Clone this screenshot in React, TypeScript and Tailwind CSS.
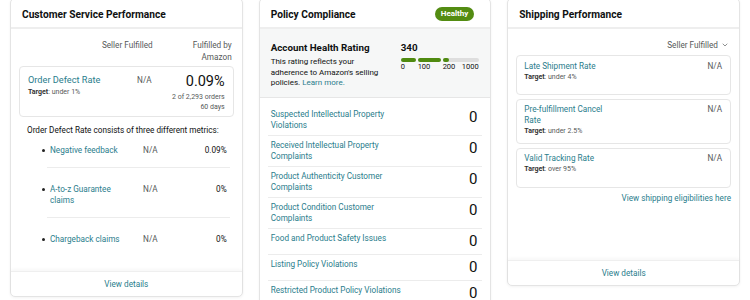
import { ChevronDown } from 'lucide-react';

const link = 'text-[#2a7d8c]';

function CardHeader({ title, badge }: { title: string; badge?: string }) {
    return (
        <div className="h-[30px] flex items-center justify-between pl-[11px] pr-[16px] pt-[4px] border-b-2 border-[#eeeeee]">
            <h2 className="text-[10.2px] font-bold text-[#0f1111]">{title}</h2>
            {badge && (
                <span className="h-[14px] px-[6px] -mt-[3px] flex items-center rounded-full bg-[#538c12] text-white text-[8px] font-bold">
                    {badge}
                </span>
            )}
        </div>
    );
}

function CardFooter() {
    return (
        <div className={`mt-auto h-[25px] flex items-center justify-center border-t border-[#efefef] shadow-[0_-2px_3px_rgba(0,0,0,0.03)] text-[8.2px] ${link}`}>
            View details
        </div>
    );
}

const defectMetrics = [
    { name: 'Negative feedback', seller: 'N/A', amazon: '0.09%' },
    { name: 'A-to-z Guarantee claims', seller: 'N/A', amazon: '0%' },
    { name: 'Chargeback claims', seller: 'N/A', amazon: '0%' },
];

const policyRows = [
    'Suspected Intellectual Property Violations',
    'Received Intellectual Property Complaints',
    'Product Authenticity Customer Complaints',
    'Product Condition Customer Complaints',
    'Food and Product Safety Issues',
    'Listing Policy Violations',
    'Restricted Product Policy Violations',
    'Other Policy Violations',
];

const shippingMetrics = [
    { name: 'Late Shipment Rate', target: 'under 4%' },
    { name: 'Pre-fulfillment Cancel Rate', target: 'under 2.5%' },
    { name: 'Valid Tracking Rate', target: 'over 95%' },
];

function CustomerServiceCard() {
    return (
        <div className="h-[299px] flex flex-col bg-white border border-[#e4e4e4] rounded-[5px] shadow-[0_1px_3px_rgba(0,0,0,0.05)]">
            <CardHeader title="Customer Service Performance" />
            <div className="px-2 pt-[10px]">
                {/* Column headings */}
                <div className="flex pr-[2px] text-[8.2px] leading-[12px] text-[#565959]">
                    <div className="flex-1" />
                    <div className="text-right">Seller Fulfilled</div>
                    <div className="w-[79px] text-right">
                        Fulfilled by
                        <br />
                        Amazon
                    </div>
                </div>

                {/* Order defect rate box */}
                <div className="mt-[3px] border border-[#e6e6e6] rounded-[4px] px-[8px] pt-[7px] pb-[4px] flex items-start">
                    <div className="flex-1">
                        <div className={`text-[9.2px] leading-[12px] ${link}`}>Order Defect Rate</div>
                        <div className="mt-[1px] text-[7px] leading-[10px] text-[#565959]">
                            <span className="font-bold text-[#333]">Target</span>: under 1%
                        </div>
                    </div>
                    <div className="text-[8.2px] leading-[12px] text-[#565959]">N/A</div>
                    <div className="w-[73px] text-right">
                        <div className="text-[14.5px] leading-[16px] text-[#0f1111]">0.09%</div>
                        <div className="mt-[2px] text-[7px] leading-[10px] text-[#565959]">2 of 2,293 orders</div>
                        <div className="text-[7px] leading-[10px] text-[#565959]">60 days</div>
                    </div>
                </div>

                <p className="mt-[8px] pl-2 text-[8.2px] leading-[11px] text-[#0f1111]">
                    Order Defect Rate consists of three different metrics:
                </p>

                <ul className="mt-[9px] ml-[28px] mr-[4px]">
                    {defectMetrics.map((m, i) => (
                        <li
                            key={m.name}
                            className={`grid grid-cols-[76px_1fr_69px] pl-[3px] pr-[3px] pb-[11px] text-[8.2px] leading-[11px] ${
                                i === 0 ? 'pt-0' : 'pt-[16px]'
                            } ${i < defectMetrics.length - 1 ? 'border-b border-[#ececec]' : ''}`}
                        >
                            <div className={`${link} flex`}>
                                <span className="shrink-0 -ml-[8px] mr-[5px] mt-[4px] w-[3px] h-[3px] rounded-full bg-[#222]" />
                                <span>{m.name}</span>
                            </div>
                            <div className="text-right text-[#565959]">{m.seller}</div>
                            <div className="text-right text-[#0f1111]">{m.amazon}</div>
                        </li>
                    ))}
                </ul>
            </div>
            <CardFooter />
        </div>
    );
}

function PolicyComplianceCard() {
    return (
        <div className="bg-white border border-[#e4e4e4] rounded-[5px] shadow-[0_1px_3px_rgba(0,0,0,0.05)]">
            <CardHeader title="Policy Compliance" badge="Healthy" />

            {/* Account health rating */}
            <div className="flex bg-[#f6f7f7] border-b border-[#e6e6e6] pl-[11px] pt-[12px] pb-[8px]">
                <div className="w-[115px]">
                    <div className="text-[9.8px] leading-[13px] font-bold text-[#0f1111]">Account Health Rating</div>
                    <p className="mt-[3px] text-[8px] leading-[10.5px] text-[#0f1111]">
                        This rating reflects your adherence to Amazon's selling policies.{' '}
                        <span className={link}>Learn more.</span>
                    </p>
                </div>
                <div className="ml-[15px] w-[78px]">
                    <div className="text-[9.8px] leading-[13px] font-bold text-[#0f1111]">340</div>
                    <div className="mt-[4px] flex gap-[2px] h-[4px]">
                        <div className="w-[15px] rounded-[2px] bg-[#4f8a10]" />
                        <div className="w-[23px] rounded-[2px] bg-[#4f8a10]" />
                        <div className="flex-1 rounded-[2px] bg-[#dedede] flex">
                            <div className="w-[6px] rounded-[2px] bg-[#4f8a10]" />
                        </div>
                    </div>
                    <div className="flex text-[7.5px] leading-[10px] text-[#0f1111]">
                        <span className="w-[17px]">0</span>
                        <span className="w-[25px]">100</span>
                        <span>200</span>
                        <span className="ml-auto">1000</span>
                    </div>
                </div>
            </div>

            {/* Policy rows */}
            <div className="px-2 pt-[7px]">
                {policyRows.map((row) => (
                    <div
                        key={row}
                        className="flex items-start justify-between py-[4px] pl-[3px] pr-[5px] border-b border-[#ececec]"
                    >
                        <span className={`w-[140px] text-[8.2px] leading-[11px] ${link}`}>{row}</span>
                        <span className="text-[15px] leading-[17px] text-[#0f1111]">0</span>
                    </div>
                ))}
            </div>
        </div>
    );
}

function ShippingCard() {
    return (
        <div className="h-[288px] flex flex-col bg-white border border-[#e4e4e4] rounded-[5px] shadow-[0_1px_3px_rgba(0,0,0,0.05)]">
            <CardHeader title="Shipping Performance" />
            <div className="px-2 pt-[10px]">
                <div className="flex justify-end items-center gap-[3px] pr-[2px] text-[8.2px] leading-[12px] text-[#565959]">
                    Seller Fulfilled
                    <ChevronDown className="w-[8px] h-[8px]" strokeWidth={2} />
                </div>

                <div className="mt-[4px] flex flex-col gap-[3.5px]">
                    {shippingMetrics.map((m) => (
                        <div
                            key={m.name}
                            className="min-h-[40px] flex items-start justify-between border border-[#e6e6e6] rounded-[4px] pl-[7px] pr-[8px] pt-[4.5px] pb-[6px]"
                        >
                            <div>
                                <div className={`w-[85px] text-[8.2px] leading-[11px] ${link}`}>{m.name}</div>
                                <div className="text-[7px] leading-[11px] text-[#565959]">
                                    <span className="font-bold text-[#333]">Target</span>: {m.target}
                                </div>
                            </div>
                            <span className="text-[8.2px] leading-[11px] text-[#565959]">N/A</span>
                        </div>
                    ))}
                </div>

                <div className={`mt-[5px] text-right text-[8.2px] leading-[11px] ${link}`}>
                    View shipping eligibilities here
                </div>
            </div>
            <CardFooter />
        </div>
    );
}

export default function App() {
    return (
        <div
            className="w-[750px] h-[300px] overflow-hidden bg-white"
            style={{ fontFamily: 'Roboto, "Liberation Sans", Arial, sans-serif' }}
        >
            <div className="grid grid-cols-3 gap-4 items-start px-[10px] -mt-[2px]">
                <CustomerServiceCard />
                <PolicyComplianceCard />
                <ShippingCard />
            </div>
        </div>
    );
}
